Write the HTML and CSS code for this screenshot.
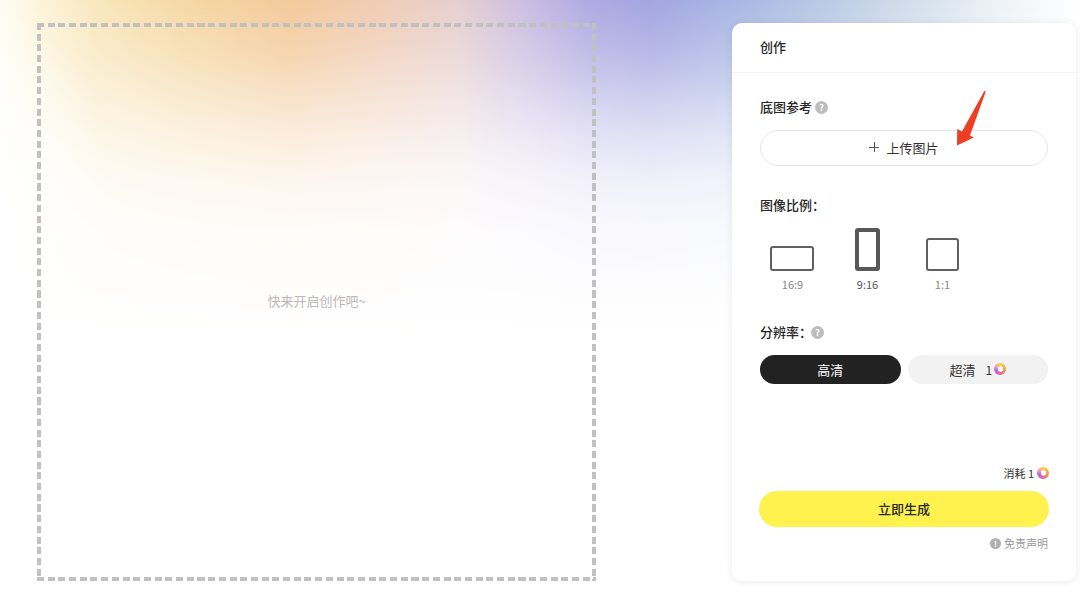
FILE: index.html
```html
<!DOCTYPE html>
<html lang="zh-CN">

<head>
    <meta charset="UTF-8">
    <meta name="viewport" content="width=device-width, initial-scale=1.0">
    <title>创作</title>
    <link rel="stylesheet" href="styles.css">
</head>

<body>
    <div class="page">
        <main class="canvas">
            <p class="canvas-hint">快来开启创作吧~</p>
        </main>

        <aside class="panel">
            <header class="panel-header">创作</header>

            <div class="panel-body">
                <section class="group-upload">
                    <div class="group-title">底图参考<span class="help">?</span></div>
                    <button class="upload-btn"><span class="plus"></span>上传图片</button>
                </section>

                <section class="group-ratio">
                    <div class="group-title">图像比例：</div>
                    <div class="ratio-list">
                        <div class="ratio-item">
                            <span class="ratio-shape ratio-wide"></span>
                            <span class="ratio-label">16:9</span>
                        </div>
                        <div class="ratio-item">
                            <span class="ratio-shape ratio-tall"></span>
                            <span class="ratio-label">9:16</span>
                        </div>
                        <div class="ratio-item">
                            <span class="ratio-shape ratio-square"></span>
                            <span class="ratio-label">1:1</span>
                        </div>
                    </div>
                </section>

                <section class="group-quality">
                    <div class="group-title">分辨率：<span class="help after-colon">?</span></div>
                    <div class="quality-list">
                        <button class="quality-btn active">高清</button>
                        <button class="quality-btn">超清 <span class="quality-cost">1<span class="coin"></span></span></button>
                    </div>
                </section>

                <footer class="panel-footer">
                    <div class="cost">消耗 1<span class="coin"></span></div>
                    <button class="generate-btn">立即生成</button>
                    <div class="disclaimer"><span class="notice">!</span>免责声明</div>
                </footer>
            </div>
        </aside>
    </div>

    <!-- annotation arrow on top of the screenshot -->
    <svg class="arrow" width="40" height="64" viewBox="0 0 40 64">
        <path d="M35 1.5 C35.8 0.5 37 1 36.6 2 L21 45.5 L24.8 47.5 L8 55.5 L8.2 39 L13 41.5 Z" fill="#ee3f24" />
    </svg>
</body>

</html>
```

FILE: styles.css
```css
/* Global Styles */
* {
    box-sizing: border-box;
}

html,
body {
    height: 100%;
}

body {
    margin: 0;
    overflow: hidden;
    font-family: "Noto Sans CJK SC", "Liberation Sans", sans-serif;
    color: #262626;
    background-color: #ffffff;
}

/* Colour wash behind everything, fades out downwards */
body::before {
    content: "";
    position: absolute;
    z-index: -1;
    left: 0;
    top: 0;
    width: 1080px;
    height: 340px;
    background-image:
        radial-gradient(ellipse 110px 200px at 0 210px, rgba(255, 255, 255, 0.85) 0%, rgba(255, 255, 255, 0) 100%),
        linear-gradient(90deg, #fffdf4 0, #fdf4da 40px, #f8e6bc 100px, #f5d8a4 190px, #f3c99a 290px, #efcdb8 390px, #e6cfd0 460px, #cdbfe2 520px, #b0aae2 590px, #a3a5e0 650px, #a9b8e4 740px, #bccbe6 830px, #cfdcea 900px, #eef3f7 1000px, #ffffff 1080px);
    -webkit-mask-image: linear-gradient(180deg, #000 0, rgba(0, 0, 0, 0.88) 30px, rgba(0, 0, 0, 0.74) 60px, rgba(0, 0, 0, 0.52) 100px, rgba(0, 0, 0, 0.32) 140px, rgba(0, 0, 0, 0.17) 180px, rgba(0, 0, 0, 0.07) 230px, rgba(0, 0, 0, 0.02) 300px, transparent 340px);
    mask-image: linear-gradient(180deg, #000 0, rgba(0, 0, 0, 0.88) 30px, rgba(0, 0, 0, 0.74) 60px, rgba(0, 0, 0, 0.52) 100px, rgba(0, 0, 0, 0.32) 140px, rgba(0, 0, 0, 0.17) 180px, rgba(0, 0, 0, 0.07) 230px, rgba(0, 0, 0, 0.02) 300px, transparent 340px);
}

.page {
    display: flex;
    justify-content: space-between;
    height: 595px;
    padding: 23px 4px 14px 37px;
}

/* Dashed canvas */
.canvas {
    display: flex;
    align-items: center;
    justify-content: center;
    width: 559px;
    height: 558px;
    background-image:
        repeating-linear-gradient(90deg, #c1c1c1 0 7px, transparent 7px 10.7px),
        repeating-linear-gradient(90deg, #c1c1c1 0 7px, transparent 7px 10.7px),
        repeating-linear-gradient(180deg, #c1c1c1 0 7px, transparent 7px 10.7px),
        repeating-linear-gradient(180deg, #c1c1c1 0 7px, transparent 7px 10.7px);
    background-size: 100% 4px, 100% 4px, 4px 100%, 4px 100%;
    background-position: 0 0, 0 100%, 0 0, 100% 0;
    background-repeat: no-repeat;
}

.canvas-hint {
    margin: 0 0 4px;
    font-size: 13px;
    color: #b9b9b9;
}

/* Right panel */
.panel {
    display: flex;
    flex-direction: column;
    width: 344px;
    height: 558px;
    background: #ffffff;
    border-radius: 10px;
    box-shadow: 0 1px 8px rgba(0, 0, 0, 0.08);
}

.panel-header {
    height: 50px;
    padding: 15px 28px 0;
    font-size: 13px;
    line-height: 18px;
    font-weight: 500;
    border-bottom: 1px solid #f3f3f4;
}

.panel-body {
    display: flex;
    flex: 1;
    flex-direction: column;
    padding: 0 28px;
}

.group-title {
    display: flex;
    align-items: center;
    gap: 3px;
    height: 18px;
    font-size: 13px;
    line-height: 18px;
    font-weight: 500;
}

.help {
    width: 13px;
    height: 13px;
    border-radius: 50%;
    background: #bdbdbd;
    color: #ffffff;
    font-size: 9px;
    line-height: 13px;
    font-weight: 700;
    text-align: center;
}

.help.after-colon {
    margin-left: -4px;
}

.group-upload {
    padding-top: 25px;
}

.upload-btn {
    display: flex;
    align-items: center;
    justify-content: center;
    width: 100%;
    height: 36px;
    margin-top: 14px;
    padding: 0 0 2px;
    border: 1px solid #e6e6e6;
    border-radius: 18px;
    background: #ffffff;
    font-family: inherit;
    font-size: 13px;
    color: #333333;
}

.plus {
    width: 10px;
    height: 10px;
    margin-right: 7px;
    background:
        linear-gradient(#555555, #555555) center / 10px 1px no-repeat,
        linear-gradient(#555555, #555555) center / 1px 10px no-repeat;
}

/* Aspect ratio */
.group-ratio {
    padding-top: 30px;
}

.ratio-list {
    display: flex;
    margin-top: 14px;
    margin-left: -5px;
}

.ratio-item {
    display: flex;
    flex-direction: column;
    align-items: center;
    justify-content: flex-end;
    width: 75px;
    height: 64px;
}

.ratio-shape {
    display: block;
    border: 2px solid #606060;
    border-radius: 3px;
}

.ratio-wide {
    width: 44px;
    height: 25px;
    margin-right: 2px;
}

.ratio-tall {
    width: 25px;
    height: 44px;
    border-width: 4px;
    border-color: #585858;
}

.ratio-square {
    width: 33px;
    height: 33px;
}

.ratio-label {
    margin-top: 6px;
    font-size: 11px;
    line-height: 15px;
    color: #888888;
}

.ratio-item:nth-child(2) .ratio-label {
    color: #555555;
}

/* Resolution */
.group-quality {
    padding-top: 31px;
}

.quality-list {
    display: flex;
    gap: 7px;
    margin-top: 14px;
}

.quality-btn {
    display: flex;
    flex: 1;
    align-items: center;
    justify-content: center;
    height: 29px;
    padding: 0 0 1px;
    border: none;
    border-radius: 15px;
    background: #f2f2f2;
    font-family: inherit;
    font-size: 13px;
    color: #333333;
}

.quality-btn.active {
    background: #222222;
    color: #ffffff;
}

.quality-cost {
    display: flex;
    align-items: center;
    margin-left: 10px;
    font-size: 12px;
}

.quality-cost .coin {
    margin-left: 2px;
}

.coin {
    display: inline-block;
    width: 12px;
    height: 12px;
    border-radius: 50%;
    background:
        radial-gradient(circle at 55% 50%, #ffffff 0 2.5px, transparent 3px),
        conic-gradient(#fbd338, #f7a33c 25%, #ee5aa6 50%, #b86be2 70%, #f3a0c0 85%, #fbd338);
}

/* Footer */
.panel-footer {
    margin: auto -1px 0;
    padding-bottom: 30px;
}

.cost {
    display: flex;
    align-items: center;
    justify-content: flex-end;
    height: 16px;
    font-size: 11px;
    color: #333333;
}

.cost .coin {
    margin-left: 3px;
}

.generate-btn {
    display: block;
    width: 100%;
    height: 36px;
    margin-top: 10px;
    padding: 0 0 2px;
    border: none;
    border-radius: 18px;
    background: #fff24f;
    font-family: inherit;
    font-size: 13px;
    font-weight: 500;
    color: #262626;
}

.disclaimer {
    display: flex;
    align-items: center;
    justify-content: flex-end;
    height: 16px;
    margin-top: 8px;
    padding-right: 1px;
    font-size: 11px;
    color: #9a9a9a;
}

.notice {
    width: 11px;
    height: 11px;
    margin-right: 3px;
    border-radius: 50%;
    background: #b0b0b0;
    color: #ffffff;
    font-size: 8px;
    line-height: 11px;
    font-weight: 700;
    text-align: center;
}

/* Annotation */
.arrow {
    position: absolute;
    left: 949px;
    top: 90px;
}
```
